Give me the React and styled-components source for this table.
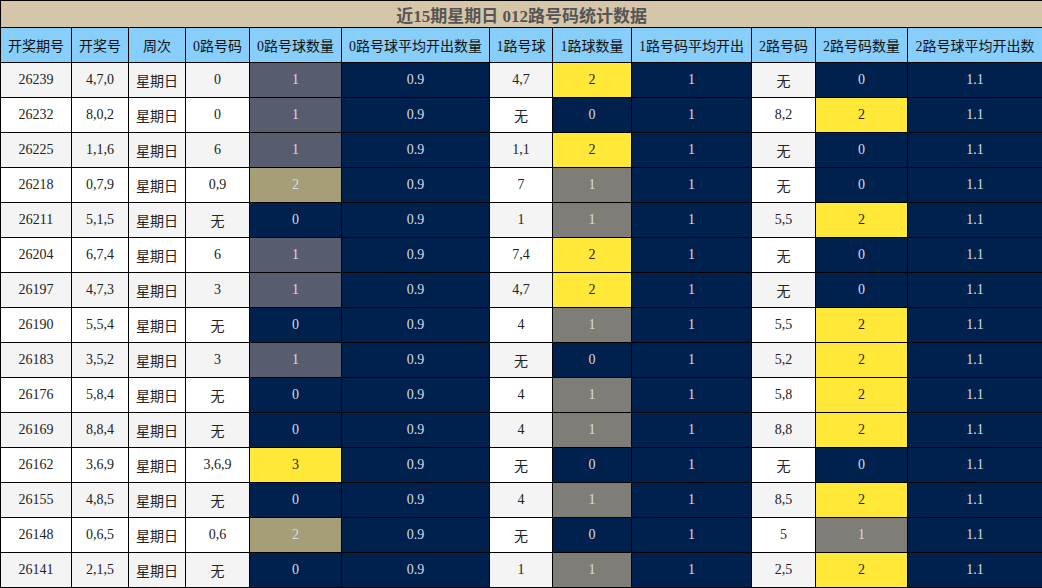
import React from "react"
import styled, { createGlobalStyle } from "styled-components"

const GlobalStyle = createGlobalStyle`
    body {
        margin: 0;
        background: #ffffff;
        font-family: "Liberation Serif", "Noto Sans CJK SC", serif;
    }
`

const Table = styled.table`
    width: 1042px;
    border-collapse: collapse;
    table-layout: fixed;
    font-family: "Liberation Serif", "Noto Sans CJK SC", serif;
    font-size: 14px;
`
const TitleCell = styled.th`
    height: 26px;
    padding: 0;
    background: #d5c6aa;
    color: #555555;
    font-size: 17px;
    font-weight: bold;
    border: 1px solid #000;
    text-align: center;
`
const HeadCell = styled.th`
    height: 34px;
    padding: 0;
    background: #87cefa;
    color: #111;
    font-weight: normal;
    border: 1px solid #000;
    text-align: center;
    white-space: nowrap;
`
const Row = styled.tr`
    background: ${p => (p.$odd ? "#f4f4f4" : "#ffffff")};
`
const Cell = styled.td`
    height: 34px;
    padding: 0;
    border: 1px solid #000;
    text-align: center;
    color: ${p => (p.$bg ? (p.$bg === "#ffe838" ? "#222" : "#d8dce4") : "#222")};
    background: ${p => p.$bg || "transparent"};
`

const NAVY = "#00214d"
const YELLOW = "#ffe838"
const GREY = "#7f7d77"
const SLATE = "#575d6e"
const KHAKI = "#a69e76"

const zeroColors = { 0: NAVY, 1: SLATE, 2: KHAKI, 3: YELLOW }
const otherColors = { 0: NAVY, 1: GREY, 2: YELLOW }

const widths = [71, 57, 57, 64, 92, 148, 63, 79, 120, 64, 92, 135]
const headers = ["开奖期号", "开奖号", "周次", "0路号码", "0路号球数量", "0路号球平均开出数量", "1路号球", "1路球数量", "1路号码平均开出", "2路号码", "2路号码数量", "2路号球平均开出数"]

const rows = [
    [26239, "4,7,0", "0", 1, "4,7", 2, "无", 0],
    [26232, "8,0,2", "0", 1, "无", 0, "8,2", 2],
    [26225, "1,1,6", "6", 1, "1,1", 2, "无", 0],
    [26218, "0,7,9", "0,9", 2, "7", 1, "无", 0],
    [26211, "5,1,5", "无", 0, "1", 1, "5,5", 2],
    [26204, "6,7,4", "6", 1, "7,4", 2, "无", 0],
    [26197, "4,7,3", "3", 1, "4,7", 2, "无", 0],
    [26190, "5,5,4", "无", 0, "4", 1, "5,5", 2],
    [26183, "3,5,2", "3", 1, "无", 0, "5,2", 2],
    [26176, "5,8,4", "无", 0, "4", 1, "5,8", 2],
    [26169, "8,8,4", "无", 0, "4", 1, "8,8", 2],
    [26162, "3,6,9", "3,6,9", 3, "无", 0, "无", 0],
    [26155, "4,8,5", "无", 0, "4", 1, "8,5", 2],
    [26148, "0,6,5", "0,6", 2, "无", 0, "5", 1],
    [26141, "2,1,5", "无", 0, "1", 1, "2,5", 2],
]

const App = () => {
    return (
        <>
            <GlobalStyle />
            <Table>
                <colgroup>
                    {widths.map((w, i) => <col key={i} style={{ width: w }} />)}
                </colgroup>
                <thead>
                    <tr>
                        <TitleCell colSpan={12}>近15期星期日 012路号码统计数据</TitleCell>
                    </tr>
                    <tr>
                        {headers.map(h => <HeadCell key={h}>{h}</HeadCell>)}
                    </tr>
                </thead>
                <tbody>
                    {rows.map((r, i) => (
                        <Row key={r[0]} $odd={i % 2 === 0}>
                            <Cell>{r[0]}</Cell>
                            <Cell>{r[1]}</Cell>
                            <Cell>星期日</Cell>
                            <Cell>{r[2]}</Cell>
                            <Cell $bg={zeroColors[r[3]]}>{r[3]}</Cell>
                            <Cell $bg={NAVY}>0.9</Cell>
                            <Cell>{r[4]}</Cell>
                            <Cell $bg={otherColors[r[5]]}>{r[5]}</Cell>
                            <Cell $bg={NAVY}>1</Cell>
                            <Cell>{r[6]}</Cell>
                            <Cell $bg={otherColors[r[7]]}>{r[7]}</Cell>
                            <Cell $bg={NAVY}>1.1</Cell>
                        </Row>
                    ))}
                </tbody>
            </Table>
        </>
    )
}

export default App
